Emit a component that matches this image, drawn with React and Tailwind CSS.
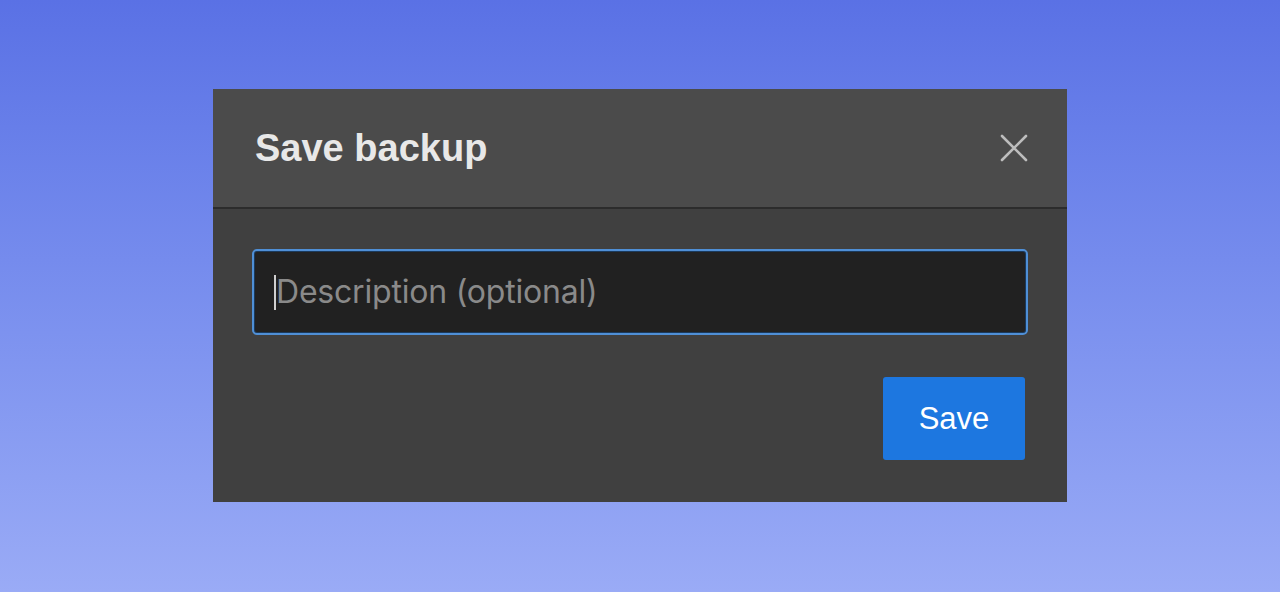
export default function App() {
  return (
    <div className="w-[1280px] h-[592px] bg-gradient-to-b from-[#5a71e5] to-[#9aabf6] flex items-start justify-center pt-[89px]">
      <div className="w-[854px] h-[413px] flex flex-col bg-[#404040]">
        <div className="h-[120px] shrink-0 bg-[#4b4b4b] border-b-2 border-[#2c2c2c] flex items-center justify-between pl-[42px] pr-[39px]">
          <h1 className="text-[38px] font-bold text-[#e8e8e8] leading-none" style={{ fontFamily: '"Liberation Sans", Arial, sans-serif' }}>
            Save backup
          </h1>
          <svg width="28" height="28" viewBox="0 0 28 28">
            <path d="M2 2 L26 26 M26 2 L2 26" stroke="#bdbdbd" strokeWidth="2.6" strokeLinecap="round" />
          </svg>
        </div>
        <div className="flex flex-col px-[39px] pt-[40px]">
          <div className="h-[86px] rounded-[5px] border-2 border-[#4f8fd6] bg-[#212121] flex items-center pl-[20px] shadow-[inset_0_0_0_1px_#1b3a5c]">
            <span className="w-[2px] h-[35px] bg-[#cfcfcf]" />
            <span className="text-[32px] text-[#8a8a8a] leading-none tracking-[-0.2px]" style={{ fontFamily: 'Inter, sans-serif' }}>
              Description (optional)
            </span>
          </div>
          <div className="flex justify-end pt-[42px] pr-[3px]">
            <button className="w-[142px] h-[83px] rounded-[3px] bg-[#1d77e0] text-white text-[31px] leading-none" style={{ fontFamily: '"Liberation Sans", Arial, sans-serif' }}>
              Save
            </button>
          </div>
        </div>
      </div>
    </div>
  );
}
